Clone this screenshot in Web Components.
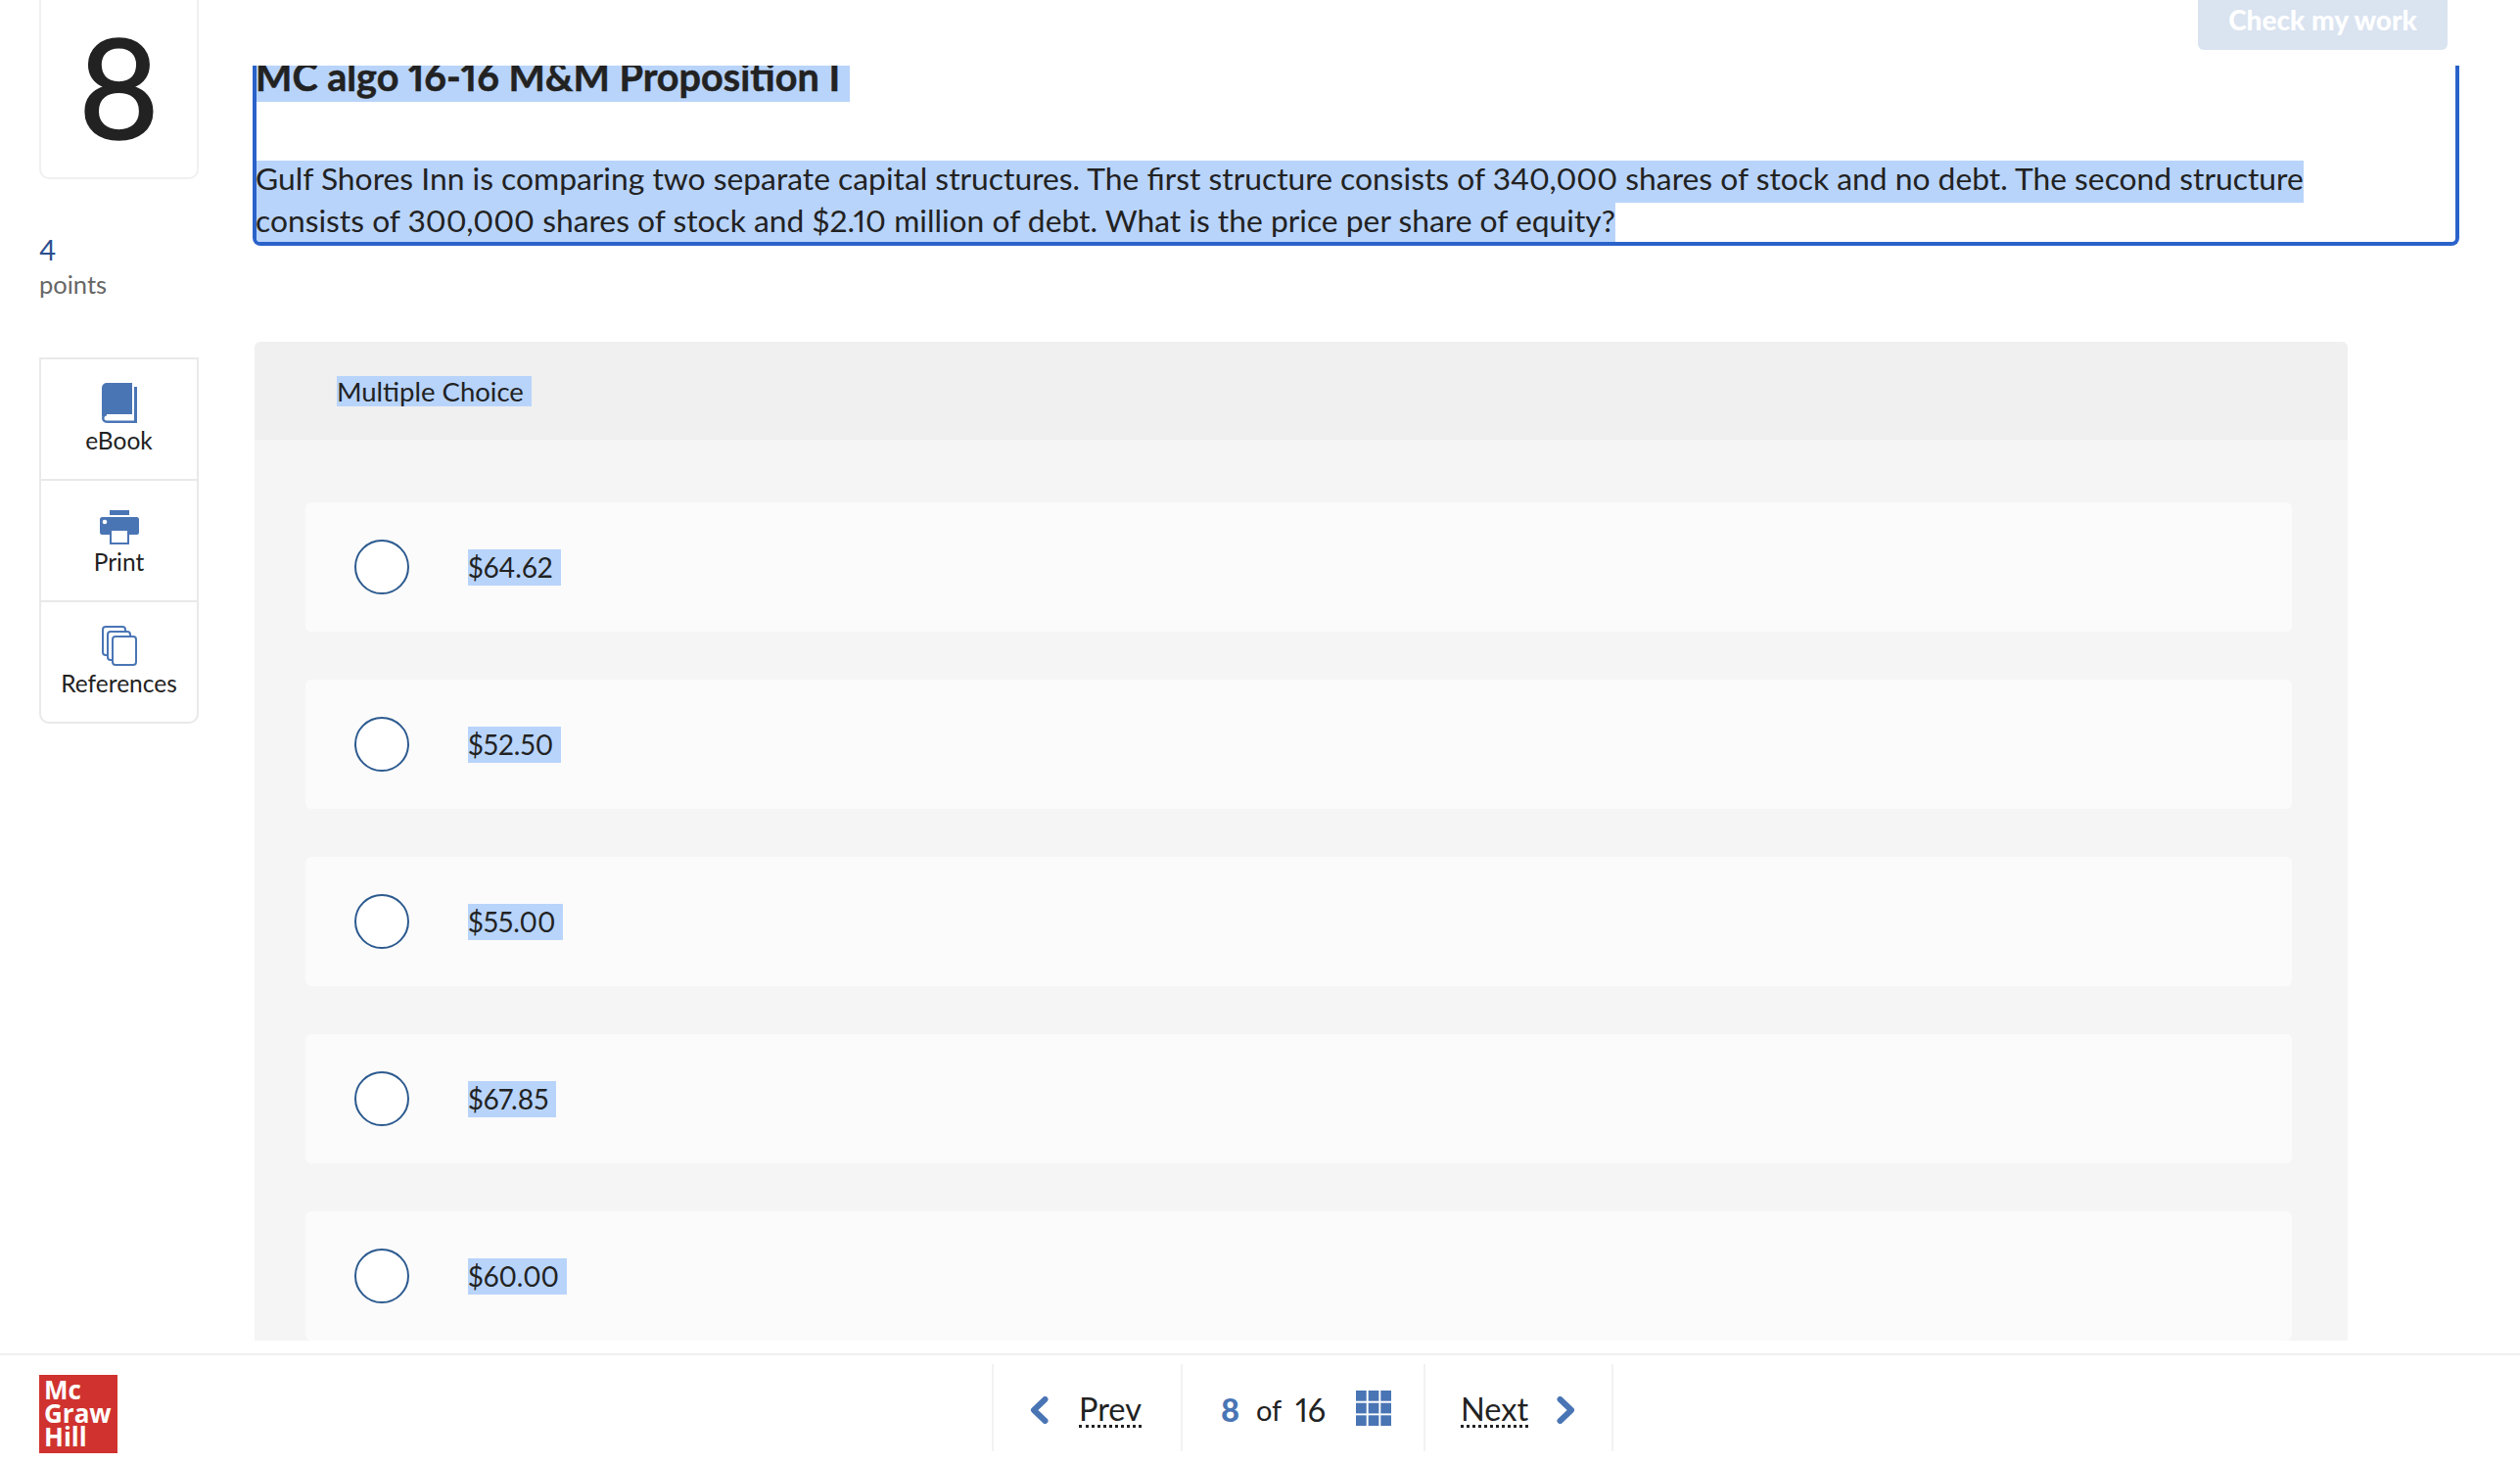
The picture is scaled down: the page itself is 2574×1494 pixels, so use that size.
<!DOCTYPE html>
<html lang="en">
<head>
<meta charset="utf-8">
<title>MC algo 16-16 M&amp;M Proposition I</title>
<style>
    html, body { margin: 0; height: 100%; background: #fff; overflow: hidden; }
    body { font-family: Lato, "Liberation Sans", sans-serif; font-variant-numeric: proportional-nums; color: #222; }
    quiz-page { --accent: #4a75b5; --hl: #b8d4fb; }
</style>
</head>
<body>
<quiz-page>
    <question-rail slot="rail" number="8" points="4">
        <rail-tool label="eBook">
            <svg width="36" height="41" viewBox="0 0 36 41" fill="#4a75b5">
                <path d="M5 0H31V32H5C3 32 1.5 33 0 34.500V5A5 5 0 0 1 5 0Z"/>
                <path d="M33 4H36V41H5A5 5 0 0 1 0 36A5 5 0 0 1 5 31V33.500A2.500 2.500 0 0 0 5 38.500H33Z"/>
                <path d="M5 33.500H31V36H5Z" fill="#fff"/>
            </svg>
        </rail-tool>
        <rail-tool label="Print">
            <svg width="40" height="35" viewBox="0 0 40 35" fill="#4a75b5">
                <rect x="10" width="20" height="5"/>
                <rect y="7" width="40" height="18" rx="2.500"/>
                <circle cx="5" cy="12" r="2.300" fill="#fff"/>
                <rect x="10" y="19" width="20" height="16"/>
                <rect x="12" y="21" width="16" height="12" fill="#fff"/>
            </svg>
        </rail-tool>
        <rail-tool label="References">
            <svg width="36" height="41" viewBox="0 0 36 41" fill="#fff" stroke="#4a75b5" stroke-width="2">
                <rect x="1" y="1" width="23" height="29" rx="3"/>
                <rect x="6" y="6" width="23" height="29" rx="3"/>
                <rect x="11" y="11" width="24" height="29" rx="3"/>
            </svg>
        </rail-tool>
    </question-rail>

    <question-prompt slot="prompt" heading="MC algo 16-16 M&amp;M Proposition I">
        <span>Gulf Shores Inn is comparing two separate capital structures. The first structure consists of 340,000 shares of stock and no debt. The second structure </span>
        <span>consists of 300,000 shares of stock and $2.10 million of debt. What is the price per share of equity? </span>
    </question-prompt>

    <choice-panel slot="panel" heading="Multiple Choice">
        <choice-option>$64.62</choice-option>
        <choice-option>$52.50</choice-option>
        <choice-option>$55.00</choice-option>
        <choice-option>$67.85</choice-option>
        <choice-option>$60.00</choice-option>
    </choice-panel>

    <quiz-footer slot="footer" current="8" total="16"></quiz-footer>
</quiz-page>

<script>
const pageTemplate = document.createElement('template');
pageTemplate.innerHTML = `
    <style>
        :host { display: flex; flex-direction: column; height: 1494px; overflow: hidden; }
        .main { display: flex; height: 1382px; overflow: hidden; padding-left: 40px; box-sizing: border-box; }
        .content { margin-left: 55px; flex: 1; min-width: 0; display: flex; flex-direction: column; padding-bottom: 13px; box-sizing: border-box; }
        .top { height: 67px; flex: none; display: flex; justify-content: flex-end; padding-right: 74px; }
        button {
            height: 51px; width: 255px; border: 0; padding: 0 0 12px; background: #dae3f0; color: #fff;
            border-radius: 0 0 6px 6px; font: 900 28px Lato, "Liberation Sans", sans-serif;
        }
    </style>
    <div class="main">
        <slot name="rail"></slot>
        <div class="content">
            <div class="top"><button type="button">Check my work</button></div>
            <slot name="prompt"></slot>
            <slot name="panel"></slot>
        </div>
    </div>
    <slot name="footer"></slot>
`;

class QuizPage extends HTMLElement {
    constructor() {
        super();
        this.attachShadow({ mode: 'open' });
        this.shadowRoot.appendChild(pageTemplate.content.cloneNode(true));
    }
}

const railTemplate = document.createElement('template');
railTemplate.innerHTML = `
    <style>
        :host { display: block; width: 163px; flex: none; }
        .number {
            box-sizing: border-box; height: 203px; margin-top: -20px; display: flex; align-items: center; justify-content: center;
            border: 2px solid #f0f0f0; border-radius: 10px; font-size: 142px; line-height: 1; color: #222; padding-top: 10px;
            -webkit-text-stroke: 1.5px #222;
        }
        .points { margin-top: 54px; height: 80px; }
        .value { font-size: 29px; line-height: 36px; color: #2c4f8f; }
        .label { font-size: 25.500px; line-height: 34px; color: #666; }
        .tools { margin-top: 48px; box-sizing: border-box; border: 2px solid #e9e9e9; border-radius: 0 0 10px 10px; }
    </style>
    <div class="number"></div>
    <div class="points">
        <div class="value"></div>
        <div class="label">points</div>
    </div>
    <div class="tools"><slot></slot></div>
`;

class QuestionRail extends HTMLElement {
    constructor() {
        super();
        this.attachShadow({ mode: 'open' });
        this.shadowRoot.appendChild(railTemplate.content.cloneNode(true));
    }

    connectedCallback() {
        this.shadowRoot.querySelector('.number').textContent = this.getAttribute('number');
        this.shadowRoot.querySelector('.value').textContent = this.getAttribute('points');
    }
}

const toolTemplate = document.createElement('template');
toolTemplate.innerHTML = `
    <style>
        :host { display: block; height: 124px; box-sizing: border-box; border-top: 2px solid #e9e9e9; }
        :host(:first-child) { border-top: 0; height: 122px; }
        .tool { height: 100%; display: flex; flex-direction: column; align-items: center; justify-content: flex-start; padding-top: 23px; box-sizing: border-box; }
        .icon { height: 42px; display: flex; align-items: flex-end; }
        .text { margin-top: 2px; font-size: 24.500px; line-height: 32px; color: #222; }
    </style>
    <div class="tool">
        <div class="icon"><slot></slot></div>
        <div class="text"></div>
    </div>
`;

class RailTool extends HTMLElement {
    constructor() {
        super();
        this.attachShadow({ mode: 'open' });
        this.shadowRoot.appendChild(toolTemplate.content.cloneNode(true));
    }

    connectedCallback() {
        this.shadowRoot.querySelector('.text').textContent = this.getAttribute('label');
    }
}

const promptTemplate = document.createElement('template');
promptTemplate.innerHTML = `
    <style>
        :host { display: block; width: 2254px; height: 184px; box-sizing: border-box; flex: none; border: 4px solid #2a62c9; border-top: 0; border-radius: 0 0 8px 8px; overflow: hidden; }
        h2 {
            margin: -11px 0 0; height: 48px; font-size: 39.600px; line-height: 43px; font-weight: 700; color: #222;
            display: table; background: var(--hl); padding-right: 10px; text-indent: -1px; -webkit-text-stroke: 0.500px #222;
        }
        .body { margin-top: 60px; font-size: 31.800px; color: #222; }
        ::slotted(span) { display: table; background: var(--hl); white-space: nowrap; line-height: 37px; padding-bottom: 6px; text-indent: -1px; }
    </style>
    <h2></h2>
    <div class="body"><slot></slot></div>
`;

class QuestionPrompt extends HTMLElement {
    constructor() {
        super();
        this.attachShadow({ mode: 'open' });
        this.shadowRoot.appendChild(promptTemplate.content.cloneNode(true));
    }

    connectedCallback() {
        this.shadowRoot.querySelector('h2').textContent = this.getAttribute('heading');
    }
}

const panelTemplate = document.createElement('template');
panelTemplate.innerHTML = `
    <style>
        :host { display: flex; flex-direction: column; flex: 1; min-height: 0; width: 2138px; margin: 98px 0 0 2px; overflow: hidden; border-radius: 6px 6px 0 0; background: #f5f5f5; }
        header { flex: none; height: 100px; background: #f0f0f0; display: flex; align-items: center; padding-left: 84px; }
        header span { background: var(--hl); font-size: 27.500px; line-height: 31px; padding-right: 8px; color: #222; }
        .body { padding: 64px 57px 0 52px; display: flex; flex-direction: column; gap: 49px; }
    </style>
    <header><span></span></header>
    <div class="body"><slot></slot></div>
`;

class ChoicePanel extends HTMLElement {
    constructor() {
        super();
        this.attachShadow({ mode: 'open' });
        this.shadowRoot.appendChild(panelTemplate.content.cloneNode(true));
    }

    connectedCallback() {
        this.shadowRoot.querySelector('header span').textContent = this.getAttribute('heading');
    }
}

const optionTemplate = document.createElement('template');
optionTemplate.innerHTML = `
    <style>
        :host { display: flex; align-items: center; height: 132px; flex: none; box-sizing: border-box; padding-left: 50px; background: #fbfbfb; border-radius: 6px; }
        .radio { width: 56px; height: 56px; box-sizing: border-box; border: 2px solid #2c5a8f; border-radius: 50%; background: #fff; flex: none; }
        .text { margin-left: 60px; margin-top: 1px; background: var(--hl); font-size: 28px; line-height: 37px; padding-right: 8px; color: #222; }
    </style>
    <span class="radio"></span>
    <span class="text"><slot></slot></span>
`;

class ChoiceOption extends HTMLElement {
    constructor() {
        super();
        this.attachShadow({ mode: 'open' });
        this.shadowRoot.appendChild(optionTemplate.content.cloneNode(true));
    }
}

const footerTemplate = document.createElement('template');
footerTemplate.innerHTML = `
    <style>
        :host { display: flex; align-items: flex-start; height: 112px; box-sizing: border-box; border-top: 2px solid #f0f0f0; padding-left: 40px; }
        .logo {
            width: 80px; height: 80px; margin-top: 20px; flex: none; box-sizing: border-box; padding: 3px 0 0 5px; background: #d0332f; color: #fff;
            font: 700 26px/24px "Open Sans", "Liberation Sans", sans-serif;
        }
        nav { display: flex; margin: 9px 0 0 893px; height: 89px; border-right: 2px solid #f2f2f2; font-size: 32.500px; color: #222; }
        .cell { box-sizing: border-box; display: flex; align-items: center; border-left: 2px solid #f2f2f2; padding-top: 4px; }
        .prev { width: 193px; padding-left: 37px; gap: 30px; }
        .pages { width: 248px; padding-left: 39px; }
        .next { width: 192px; padding-left: 36px; gap: 28px; }
        a { color: inherit; text-decoration: none; border-bottom: 3px dotted #222; line-height: 33px; }
        .current { color: var(--accent); font-weight: 900; width: 36px; }
        .of { font-size: 29px; width: 40px; }
        .total { width: 62px; }
        .pages svg { margin-top: -4px; }
    </style>
    <div class="logo">Mc<br>Graw<br>Hill</div>
    <nav>
        <div class="cell prev">
            <svg width="20" height="28" viewBox="0 0 20 28"><path d="M15.500 3L4 14l11.500 11" fill="none" stroke="#4a75b5" stroke-width="6" stroke-linecap="round" stroke-linejoin="round"/></svg>
            <a href="#">Prev</a>
        </div>
        <div class="cell pages">
            <span class="current"></span><span class="of">of</span><span class="total"></span>
            <svg width="36" height="36" viewBox="0 0 36 36" fill="#4a75b5">
                <rect width="10.700" height="10.700"/><rect x="12.700" width="10.700" height="10.700"/><rect x="25.300" width="10.700" height="10.700"/>
                <rect y="12.700" width="10.700" height="10.700"/><rect x="12.700" y="12.700" width="10.700" height="10.700"/><rect x="25.300" y="12.700" width="10.700" height="10.700"/>
                <rect y="25.300" width="10.700" height="10.700"/><rect x="12.700" y="25.300" width="10.700" height="10.700"/><rect x="25.300" y="25.300" width="10.700" height="10.700"/>
            </svg>
        </div>
        <div class="cell next">
            <a href="#">Next</a>
            <svg width="20" height="28" viewBox="0 0 20 28"><path d="M4.500 3L16 14L4.500 25" fill="none" stroke="#4a75b5" stroke-width="6" stroke-linecap="round" stroke-linejoin="round"/></svg>
        </div>
    </nav>
`;

class QuizFooter extends HTMLElement {
    constructor() {
        super();
        this.attachShadow({ mode: 'open' });
        this.shadowRoot.appendChild(footerTemplate.content.cloneNode(true));
    }

    connectedCallback() {
        this.shadowRoot.querySelector('.current').textContent = this.getAttribute('current');
        this.shadowRoot.querySelector('.total').textContent = this.getAttribute('total');
    }
}

customElements.define('quiz-page', QuizPage);
customElements.define('question-rail', QuestionRail);
customElements.define('rail-tool', RailTool);
customElements.define('question-prompt', QuestionPrompt);
customElements.define('choice-panel', ChoicePanel);
customElements.define('choice-option', ChoiceOption);
customElements.define('quiz-footer', QuizFooter);
</script>
</body>
</html>
